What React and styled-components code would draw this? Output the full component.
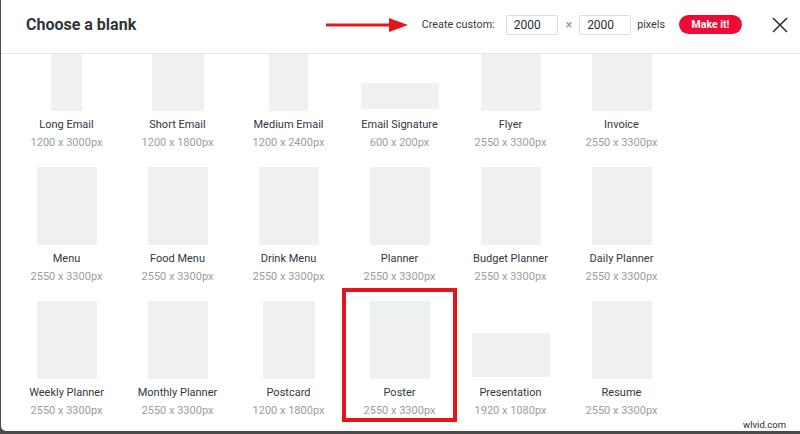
import React, { useLayoutEffect, useRef } from "react"
import styled, { createGlobalStyle } from "styled-components"

const GlobalStyle = createGlobalStyle`
  html, body {
    margin: 0;
    height: 100%;
    background: #4b4b4d;
    font-family: Roboto, "Liberation Sans", sans-serif;
  }
  #root {
    height: 100%;
  }
`

const Modal = styled.div`
  position: relative;
  height: 431px;
  margin-left: 1px;
  background: #fff;
  border-bottom-left-radius: 5px;
  display: flex;
  flex-direction: column;
  overflow: hidden;
`

const Header = styled.header`
  height: 54px;
  flex: none;
  display: flex;
  align-items: center;
  padding: 0 12px 4px 25px;
  box-sizing: border-box;
  border-bottom: 1px solid #e6e7e9;
`

const Title = styled.h1`
  margin: 0;
  font-size: 16px;
  font-weight: 700;
  color: #2f343b;
`

const Custom = styled.div`
  margin-left: auto;
  display: flex;
  align-items: center;
  font-size: 10.8px;
  color: #353a40;
`

const Arrow = styled.svg`
  display: block;
  margin-right: 14px;
`

const Field = styled.div`
  width: 52px;
  height: 20px;
  box-sizing: border-box;
  border: 1px solid #dcdde0;
  border-radius: 2px;
  display: flex;
  align-items: center;
  padding-left: 7px;
  font-size: 12px;
  color: #2a2e33;
`

const Times = styled.span`
  margin: 0 7px 0 8px;
  color: #8a8d92;
  font-size: 12px;
`

const Label = styled.span`
  margin: ${(p) => p.$m};
`

const MakeButton = styled.button`
  margin-left: 14px;
  width: 63px;
  height: 19px;
  border: none;
  border-radius: 10px;
  background: #ee0a35;
  color: #fff;
  font-family: inherit;
  font-size: 10.5px;
  font-weight: 700;
  padding: 0;
`

const Close = styled.svg`
  display: block;
  margin-left: 30px;
`

const Scroller = styled.div`
  flex: 1;
  overflow: hidden;
`

const Grid = styled.div`
  display: grid;
  grid-template-columns: repeat(6, 111px);
  grid-auto-rows: 130px;
  row-gap: 4px;
  padding: 12px 0 20px 10px;
`

const Item = styled.div`
  display: flex;
  flex-direction: column;
  align-items: center;
  padding-top: 11px;
  box-sizing: border-box;
  outline: ${(p) => (p.$selected ? "4px solid #e5141b" : "none")};
  outline-offset: -2px;
`

const ThumbBox = styled.div`
  height: 78px;
  width: 78px;
  display: flex;
  align-items: flex-end;
  justify-content: center;
`

const Thumb = styled.div`
  background: #eff0f1;
`

const Name = styled.div`
  margin-top: ${(p) => (p.$wide ? "8px" : "6px")};
  line-height: 16px;
  font-size: 11px;
  color: #33373d;
`

const Size = styled.div`
  line-height: 19px;
  font-size: 11px;
  color: #9a9da2;
`

const Watermark = styled.span`
  position: absolute;
  right: 14px;
  bottom: 1px;
  font-size: 9.5px;
  line-height: 11px;
  color: #2b2b2b;
`

const blanks = [
  ["Long Email", 1200, 3000],
  ["Short Email", 1200, 1800],
  ["Medium Email", 1200, 2400],
  ["Email Signature", 600, 200],
  ["Flyer", 2550, 3300],
  ["Invoice", 2550, 3300],
  ["Menu", 2550, 3300],
  ["Food Menu", 2550, 3300],
  ["Drink Menu", 2550, 3300],
  ["Planner", 2550, 3300],
  ["Budget Planner", 2550, 3300],
  ["Daily Planner", 2550, 3300],
  ["Weekly Planner", 2550, 3300],
  ["Monthly Planner", 2550, 3300],
  ["Postcard", 1200, 1800],
  ["Poster", 2550, 3300],
  ["Presentation", 1920, 1080],
  ["Resume", 2550, 3300],
]

const Blank = ({ name, w, h, selected }) => {
  const scale = 78 / Math.max(w, h)
  return (
    <Item $selected={selected}>
      <ThumbBox>
        <Thumb style={{ width: Math.round(w * scale), height: Math.round(h * scale) }} />
      </ThumbBox>
      <Name $wide={w > h}>{name}</Name>
      <Size>
        {w} x {h}px
      </Size>
    </Item>
  )
}

const App = () => {
  const scroller = useRef(null)

  useLayoutEffect(() => {
    if (scroller.current) scroller.current.scrollTop = 44
  }, [])

  return (
    <>
      <GlobalStyle />
      <Modal>
        <Header>
          <Title>Choose a blank</Title>
          <Custom>
            <Arrow width="82" height="16" viewBox="0 0 82 16">
              <line x1="0" y1="8" x2="67" y2="8" stroke="#e3161b" strokeWidth="3" />
              <polygon points="63,1 82,8 63,15" fill="#e3161b" />
            </Arrow>
            <Label $m="0 11px 0 0">Create custom:</Label>
            <Field>2000</Field>
            <Times>×</Times>
            <Field>2000</Field>
            <Label $m="0 0 0 6px">pixels</Label>
            <MakeButton>Make it!</MakeButton>
            <Close width="16" height="16" viewBox="0 0 16 16">
              <path d="M1 1 L15 15 M15 1 L1 15" stroke="#2f3338" strokeWidth="1.6" />
            </Close>
          </Custom>
        </Header>
        <Scroller ref={scroller}>
          <Grid>
            {blanks.map(([name, w, h]) => (
              <Blank key={name} name={name} w={w} h={h} selected={name === "Poster"} />
            ))}
          </Grid>
        </Scroller>
        <Watermark>wlvid.com</Watermark>
      </Modal>
    </>
  )
}

export default App
